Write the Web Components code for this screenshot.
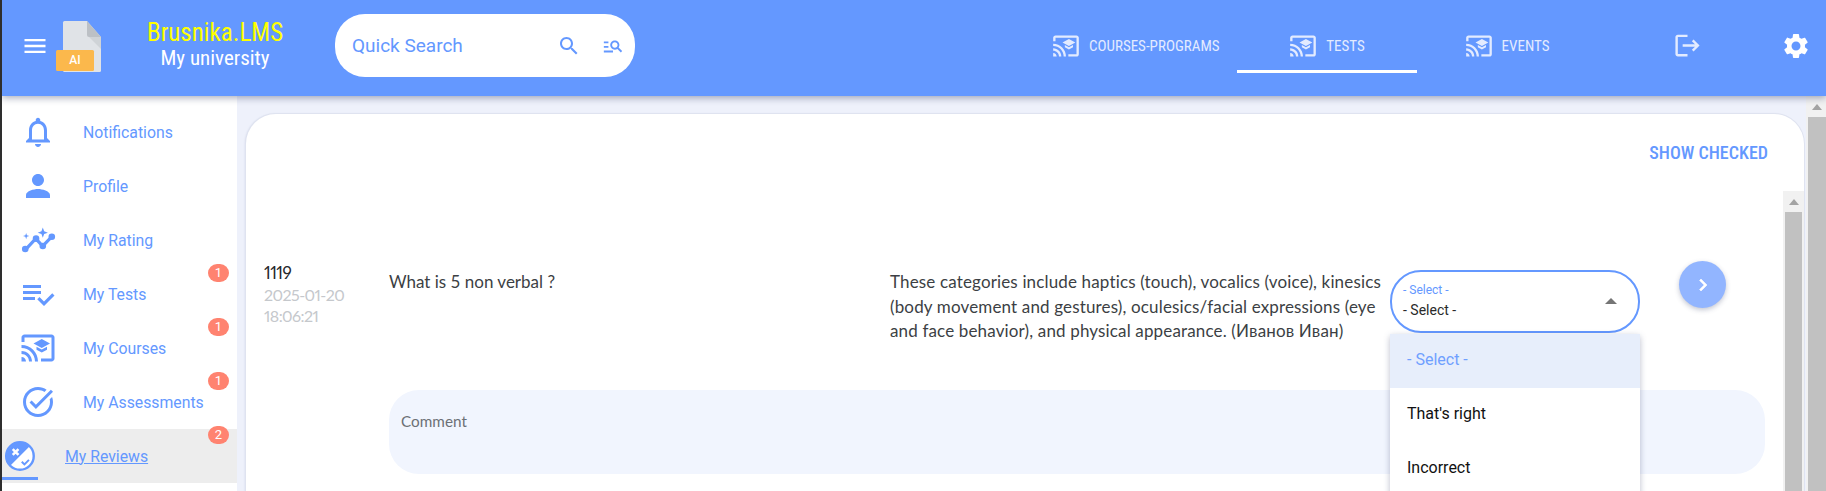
<!DOCTYPE html>
<html lang="en">
<head>
<meta charset="utf-8">
<title>Brusnika.LMS</title>
<style>
  html, body { margin: 0; height: 491px; overflow: hidden; background: #2e2e2e; }
  body { font-family: Roboto, "Liberation Sans", sans-serif; }
</style>
</head>
<body>
<lms-app>
  <lms-top-bar slot="top">
    <lms-nav-tab icon="cast">COURSES-PROGRAMS</lms-nav-tab>
    <lms-nav-tab icon="cast" active>TESTS</lms-nav-tab>
    <lms-nav-tab icon="cast">EVENTS</lms-nav-tab>
    <lms-nav-tab icon="logout" size="29"></lms-nav-tab>
  </lms-top-bar>
  <lms-side-menu slot="side">
    <lms-side-item icon="bell">Notifications</lms-side-item>
    <lms-side-item icon="person">Profile</lms-side-item>
    <lms-side-item icon="rating">My Rating</lms-side-item>
    <lms-side-item icon="tests" badge="1">My Tests</lms-side-item>
    <lms-side-item icon="cast" badge="1">My Courses</lms-side-item>
    <lms-side-item icon="assess" badge="1">My Assessments</lms-side-item>
    <lms-side-item icon="review" badge="2" active>My Reviews</lms-side-item>
  </lms-side-menu>
  <lms-card slot="main">
    <lms-review-row num="1119" date="2025-01-20" time="18:06:21">
      <span slot="question">What is 5 non verbal ?</span>
      <span slot="answer">These categories include haptics (touch), vocalics (voice), kinesics (body movement and gestures), oculesics/facial expressions (eye and face behavior), and physical appearance. (Иванов Иван)</span>
      <lms-select slot="control"></lms-select>
    </lms-review-row>
  </lms-card>
</lms-app>

<script>
// same trick as usual, keeps the markup readable
const html = String.raw;

const ICONS = {
  menu: '<path d="M3 18h18v-2H3v2zm0-5h18v-2H3v2zm0-7v2h18V6H3z"/>',
  search: '<path d="M15.5 14h-.79l-.28-.27C15.41 12.59 16 11.11 16 9.5 16 5.91 13.09 3 9.5 3S3 5.91 3 9.5 5.91 16 9.5 16c1.61 0 3.09-.59 4.23-1.57l.27.28v.79l5 4.99L20.49 19l-4.99-5zm-6 0C7.01 14 5 11.99 5 9.5S7.01 5 9.5 5 14 7.01 14 9.5 11.99 14 9.5 14z"/>',
  manage: '<path d="M7 9H2V7h5v2zm0 3H2v2h5v-2zm13.59 7l-3.83-3.83c-.8.52-1.74.83-2.76.83-2.76 0-5-2.24-5-5s2.24-5 5-5 5 2.24 5 5c0 1.02-.31 1.96-.83 2.75L22 17.59 20.59 19zM17 11c0-1.65-1.35-3-3-3s-3 1.35-3 3 1.35 3 3 3 3-1.35 3-3zM2 19h10v-2H2v2z"/>',
  cast: '<path d="M21 3H3c-1.1 0-2 .9-2 2v3h2V5h18v14h-7v2h7c1.1 0 2-.9 2-2V5c0-1.1-.9-2-2-2zM1 18v3h3c0-1.66-1.34-3-3-3zm0-4v2c2.76 0 5 2.24 5 5h2c0-3.87-3.13-7-7-7zm0-4v2c4.97 0 9 4.03 9 9h2c0-6.08-4.93-11-11-11zm10 1.09v2L14.5 15l3.5-1.91v-2L14.5 13 11 11.09zM14.5 6L9 9l5.5 3L20 9l-5.5-3z"/>',
  logout: '<path d="M17 7l-1.41 1.41L18.17 11H8v2h10.17l-2.58 2.58L17 17l5-5zM4 5h8V3H4c-1.1 0-2 .9-2 2v14c0 1.1.9 2 2 2h8v-2H4V5z"/>',
  gear: '<path d="M19.14 12.94c.04-.3.06-.61.06-.94 0-.32-.02-.64-.07-.94l2.03-1.58c.18-.14.23-.41.12-.61l-1.92-3.32c-.12-.22-.37-.29-.59-.22l-2.39.96c-.5-.38-1.03-.7-1.62-.94l-.36-2.54c-.04-.24-.24-.41-.48-.41h-3.84c-.24 0-.43.17-.47.41l-.36 2.54c-.59.24-1.13.57-1.62.94l-2.39-.96c-.22-.08-.47 0-.59.22L2.74 8.87c-.12.21-.08.47.12.61l2.03 1.58c-.05.3-.09.63-.09.94s.02.64.07.94l-2.03 1.58c-.18.14-.23.41-.12.61l1.92 3.32c.12.22.37.29.59.22l2.39-.96c.5.38 1.03.7 1.62.94l.36 2.54c.05.24.24.41.48.41h3.84c.24 0 .44-.17.47-.41l.36-2.54c.59-.24 1.13-.56 1.62-.94l2.39.96c.22.08.47 0 .59-.22l1.92-3.32c.12-.22.07-.47-.12-.61l-2.01-1.58zM12 15.6c-1.98 0-3.6-1.62-3.6-3.6s1.62-3.6 3.6-3.6 3.6 1.62 3.6 3.6-1.62 3.6-3.6 3.6z"/>',
  bell: '<path d="M12 22c1.1 0 2-.9 2-2h-4c0 1.1.9 2 2 2zm6-6v-5c0-3.07-1.63-5.64-4.5-6.32V4c0-.83-.67-1.5-1.5-1.5s-1.5.67-1.5 1.5v.68C7.64 5.36 6 7.92 6 11v5l-2 2v1h16v-1l-2-2zm-2 1H8v-6c0-2.48 1.51-4.5 4-4.5s4 2.02 4 4.5v6z"/>',
  person: '<path d="M12 12c2.21 0 4-1.79 4-4s-1.79-4-4-4-4 1.79-4 4 1.79 4 4 4zm0 2c-2.67 0-8 1.34-8 4v2h16v-2c0-2.66-5.33-4-8-4z"/>',
  rating: '<path d="M4.3 17.7l6.2-6.6 4.6 5 6.1-6.3" fill="none" stroke="currentColor" stroke-width="2.100"/><circle cx="3.500" cy="18" r="2.200"/><circle cx="10.700" cy="11.100" r="2.200"/><circle cx="15.200" cy="16" r="2.200"/><circle cx="21.200" cy="9.800" r="2.200"/><path d="M15.200 3.700l.9 2.500 2.500.9-2.500.9-.9 2.500-.9-2.500-2.500-.9 2.500-.9zM4.100 7.300l.5 1.600 1.600.5-1.600.5-.5 1.600-.5-1.600-1.600-.5 1.600-.5z"/>',
  tests: '<path d="M14 10H2v2h12v-2zm0-4H2v2h12V6zM2 16h8v-2H2v2zm19.5-4.5L23 13l-6.99 7-4.51-4.5L13 14l3.01 3 5.49-5.5z"/>',
  assess: '<path d="M22 5.18L10.59 16.6l-4.24-4.24 1.41-1.41 2.83 2.83 10-10L22 5.18zm-2.21 5.04c.13.57.21 1.17.21 1.78 0 4.42-3.58 8-8 8s-8-3.58-8-8 3.58-8 8-8c1.58 0 3.04.46 4.28 1.25l1.44-1.44C16.1 2.67 14.13 2 12 2 6.48 2 2 6.48 2 12s4.48 10 10 10 10-4.48 10-10c0-1.19-.22-2.33-.6-3.39l-1.61 1.61z"/>',
  review: '<circle cx="13.300" cy="12" r="9.200" fill="#fff" stroke="currentColor" stroke-width="1.600"/><path d="M19.800 5.500A9.200 9.200 0 0 0 6.800 18.500z"/><path d="M8.500 7.400l3.800 3.800M12.300 7.400l-3.800 3.800" stroke="#fff" stroke-width="1.700" fill="none"/><path d="M14.500 15.800l1.800 1.800 3-3" stroke="currentColor" stroke-width="1.300" fill="none"/>',
};

class LmsIcon extends HTMLElement {
  connectedCallback() {
    let size = this.getAttribute('size') || 24;
    let shadowRoot = this.attachShadow({ mode: 'open' });
    shadowRoot.innerHTML = html`
      <style>
        :host { display: inline-flex; flex: none; color: inherit; }
        svg { display: block; fill: currentColor; }
      </style>
      <svg width="${size}" height="${size}" viewBox="0 0 24 24">${ICONS[this.getAttribute('name')]}</svg>
    `;
  }
}

let appTmpl = document.createElement('template');
appTmpl.innerHTML = html`
  <style>
    :host { display: flex; flex-direction: column; height: 491px; margin-left: 2px; background: #eef1fb; overflow: hidden; }
    .top { position: relative; z-index: 3; flex: none; }
    .body { flex: 1; display: flex; min-height: 0; }
    .side { flex: none; width: 235px; }
    .main { flex: 1; min-width: 0; padding: 18px 2px 0 9px; }
  </style>
  <div class="top"><slot name="top"></slot></div>
  <div class="body">
    <div class="side"><slot name="side"></slot></div>
    <div class="main"><slot name="main"></slot></div>
    <lms-scrollbar></lms-scrollbar>
  </div>
`;

class LmsApp extends HTMLElement {
  connectedCallback() {
    let shadowRoot = this.attachShadow({ mode: 'open' });
    shadowRoot.appendChild(appTmpl.content.cloneNode(true));
  }
}

let topTmpl = document.createElement('template');
topTmpl.innerHTML = html`
  <style>
    :host { display: flex; align-items: center; height: 96px; background: #6498ff; color: #fff; padding: 0 10px 5px 19px;
      box-shadow: 0 2px 7px rgba(40, 50, 90, .4); box-sizing: border-box; }
    .logo { position: relative; width: 45px; height: 51px; margin-left: 7px; flex: none; margin-top: 1px; }
    .logo svg { display: block; }
    .logo span { position: absolute; left: 0; top: 29px; width: 38px; text-align: center; font: 500 12px Roboto, sans-serif; line-height: 21px; }
    .brand { width: 136px; margin-left: 46px; text-align: center; flex: none; font-stretch: 75%; }
    .brand b { display: block; font-weight: 400; font-size: 25px; line-height: 26px; color: #ffff00; }
    .brand i { display: block; font-style: normal; font-size: 21px; line-height: 25px; }
    .search { display: flex; align-items: center; width: 300px; height: 63px; margin-left: 52px; border-radius: 30px;
      background: #fff; color: #6498ff; padding: 0 11px 0 17px; box-sizing: border-box; flex: none; }
    .search span { flex: 1; font-size: 19px; font-stretch: 89%; }
    .search lms-icon + lms-icon { margin-left: 21px; }
    nav { margin-left: auto; display: flex; align-items: stretch; height: 100%; }
    .gear { display: flex; align-items: center; padding: 0 5px 0 4px; }
  </style>
  <lms-icon name="menu" size="28"></lms-icon>
  <div class="logo">
    <svg width="45" height="51" viewBox="0 0 45 51">
      <path d="M7 1.500A1.500 1.500 0 0 1 8.500 0H31l14 16v33.500a1.500 1.500 0 0 1-1.500 1.500h-35A1.500 1.500 0 0 1 7 49.500z" fill="#e0e3e7"/>
      <path d="M31 0l14 16H33a2 2 0 0 1-2-2z" fill="#bcc0c5"/>
      <path d="M33 16h12v12z" fill="#cfd3d7"/>
      <rect x="0" y="29" width="38" height="21" rx="1.500" fill="#fbb84c"/>
    </svg>
    <span>AI</span>
  </div>
  <div class="brand"><b>Brusnika.LMS</b><i>My university</i></div>
  <div class="search">
    <span>Quick Search</span>
    <lms-icon name="search" size="24"></lms-icon>
    <lms-icon name="manage" size="22"></lms-icon>
  </div>
  <nav><slot></slot></nav>
  <div class="gear"><lms-icon name="gear" size="30"></lms-icon></div>
`;

class LmsTopBar extends HTMLElement {
  connectedCallback() {
    let shadowRoot = this.attachShadow({ mode: 'open' });
    shadowRoot.appendChild(topTmpl.content.cloneNode(true));
  }
}

class LmsNavTab extends HTMLElement {
  connectedCallback() {
    let shadowRoot = this.attachShadow({ mode: 'open' });
    let size = this.getAttribute('size') || 28;
    shadowRoot.innerHTML = html`
      <style>
        :host { display: flex; align-items: center; justify-content: center; gap: 9px; min-width: 180px; padding: 0 17.5px;
          box-sizing: border-box; color: #e3ebff; font-size: 15px; font-stretch: 75%; position: relative; }
        :host([active])::after { content: ''; position: absolute; left: 0; right: 0; top: 70px; height: 3px; background: #fff; }
      </style>
      <lms-icon name="${this.getAttribute('icon')}" size="${size}"></lms-icon>
      <slot></slot>
    `;
  }
}

class LmsSideMenu extends HTMLElement {
  connectedCallback() {
    let shadowRoot = this.attachShadow({ mode: 'open' });
    shadowRoot.innerHTML = html`
      <style>
        :host { display: block; height: 100%; background: #fff; padding-top: 9px; box-sizing: border-box; }
      </style>
      <slot></slot>
    `;
  }
}

class LmsSideItem extends HTMLElement {
  connectedCallback() {
    let shadowRoot = this.attachShadow({ mode: 'open' });
    let badge = this.getAttribute('badge');
    shadowRoot.innerHTML = html`
      <style>
        :host { display: flex; align-items: center; height: 54px; position: relative; color: #6498ff; font-size: 15.8px; padding-left: 18px; }
        .label { margin-left: 27px; white-space: nowrap; }
        .badge { position: absolute; right: 8px; top: -3px; width: 21px; height: 18px; border-radius: 9px; background: #ff8370;
          color: #fff; font-size: 13px; line-height: 18px; text-align: center; }
        :host([active]) { background: #ededed; padding-left: 0; }
        :host([active]) lms-icon { margin-left: -2px; }
        :host([active]) .label { margin-left: 29px; text-decoration: underline; }
        :host([active])::after { content: ''; position: absolute; left: 0; width: 36px; top: 48px; height: 3px; background: #6498ff; }
      </style>
      <lms-icon name="${this.getAttribute('icon')}" size="36"></lms-icon>
      <span class="label"><slot></slot></span>
      ${badge ? `<span class="badge">${badge}</span>` : ''}
    `;
  }
}

class LmsScrollbar extends HTMLElement {
  connectedCallback() {
    let shadowRoot = this.attachShadow({ mode: 'open' });
    shadowRoot.innerHTML = html`
      <style>
        :host { display: block; flex: none; width: 20px; background: #f1f1f1; padding-left: 2px; box-sizing: border-box; }
        .arrow { width: 0; margin: 8px auto 0; border: 5px solid transparent; border-top: 0; border-bottom: 6px solid #a3a3a3; }
        .thumb { height: 400px; margin-top: 7px; background: #c1c1c1; }
      </style>
      <div class="arrow"></div>
      <div class="thumb"></div>
    `;
  }
}

let cardTmpl = document.createElement('template');
cardTmpl.innerHTML = html`
  <style>
    :host { display: flex; flex-direction: column; height: 500px; background: #fff; border-radius: 30px 30px 0 0;
      box-shadow: 0 0 0 1px #dfe3f0, -1px 0 2px #cfd4e6; }
    .head { flex: none; height: 77px; display: flex; justify-content: flex-end; align-items: flex-start; padding-right: 36px; box-sizing: border-box; }
    .head span { margin-top: 28px; color: #6498ff; font-weight: 500; font-size: 18px; font-stretch: 87%; line-height: 22px; }
    .list { flex: 1; display: flex; min-height: 0; }
    .rows { flex: 1; min-width: 0; }
    lms-scrollbar { width: 21px; padding: 0 2px; }
  </style>
  <div class="head"><span>SHOW CHECKED</span></div>
  <div class="list">
    <div class="rows"><slot></slot></div>
    <lms-scrollbar></lms-scrollbar>
  </div>
`;

class LmsCard extends HTMLElement {
  connectedCallback() {
    let shadowRoot = this.attachShadow({ mode: 'open' });
    shadowRoot.appendChild(cardTmpl.content.cloneNode(true));
  }
}

class LmsReviewRow extends HTMLElement {
  connectedCallback() {
    let shadowRoot = this.attachShadow({ mode: 'open' });
    shadowRoot.innerHTML = html`
      <style>
        :host { display: grid; grid-template-columns: 125px 501px 500px 250px auto; padding: 71px 18px 0 18px;
          font-family: Lato, sans-serif; font-size: 17px; color: #3c3f44; }
        .meta { font-size: 16px; line-height: 21px; color: #c5c8cc; height: 128px; letter-spacing: -.55px; font-variant-numeric: proportional-nums; }
        .meta b { display: block; font-weight: 400; color: #26282c; line-height: 22px; letter-spacing: -.6px; font-size: 17px; }
        .question, .answer { padding-top: 8px; line-height: 24.5px; }
        .answer { padding-right: 8px; letter-spacing: .15px; }
        .control { padding-top: 8px; }
        .next { margin: -1px 0 0 39px; width: 47px; height: 47px; border-radius: 50%; background: #92b5ff; color: #fff;
          display: flex; align-items: center; justify-content: center; box-shadow: 0 2px 5px rgba(60, 70, 110, .3); }
        .next path { stroke: currentColor; stroke-width: .6; }
        .comment { grid-column: 2 / -1; height: 84px; border-radius: 30px; background: #f1f5fe; color: #6c7076;
          padding: 20px 12px 0; line-height: 22px; font-size: 15.3px; box-sizing: border-box; }
      </style>
      <div class="meta"><b>${this.getAttribute('num')}</b>${this.getAttribute('date')}<br>${this.getAttribute('time')}</div>
      <div class="question"><slot name="question"></slot></div>
      <div class="answer"><slot name="answer"></slot></div>
      <div class="control"><slot name="control"></slot></div>
      <div class="next-wrap"><div class="next"><svg width="24" height="24" viewBox="0 0 24 24" fill="currentColor"><path d="M10 6L8.590 7.410 13.170 12l-4.580 4.590L10 18l6-6z"/></svg></div></div>
      <div class="comment">Comment</div>
    `;
  }
}

let selectTmpl = document.createElement('template');
selectTmpl.innerHTML = html`
  <style>
    :host { display: block; position: relative; z-index: 2; width: 250px; font-family: Roboto, sans-serif; }
    .box { height: 63px; border: 2px solid #6498ff; border-radius: 31px; box-sizing: border-box; padding: 11px 0 0 11px; position: relative; background: #fff; }
    .box small { display: block; font-size: 12px; line-height: 14px; color: #6498ff; }
    .box span { display: block; font-size: 14px; line-height: 20px; margin-top: 3px; color: #2a2a2a; }
    .box::after { content: ''; position: absolute; right: 21px; top: 26px; border: 6px solid transparent; border-top: 0; border-bottom: 6px solid #757575; }
    .menu { position: absolute; left: 0; right: 0; top: 64px; background: #fff; box-shadow: 0 2px 6px rgba(60, 70, 110, .35); border-radius: 3px 3px 0 0; }
    .opt { height: 54px; padding: 0 17px; line-height: 51px; font-size: 16px; color: #111; }
    .opt.on { background: #e7eefb; color: #6fa0ff; }
  </style>
  <div class="box"><small>- Select -</small><span>- Select -</span></div>
  <div class="menu">
    <div class="opt on">- Select -</div>
    <div class="opt">That's right</div>
    <div class="opt">Incorrect</div>
  </div>
`;

class LmsSelect extends HTMLElement {
  connectedCallback() {
    let shadowRoot = this.attachShadow({ mode: 'open' });
    shadowRoot.appendChild(selectTmpl.content.cloneNode(true));
  }
}

customElements.define('lms-icon', LmsIcon);
customElements.define('lms-scrollbar', LmsScrollbar);
customElements.define('lms-nav-tab', LmsNavTab);
customElements.define('lms-top-bar', LmsTopBar);
customElements.define('lms-side-item', LmsSideItem);
customElements.define('lms-side-menu', LmsSideMenu);
customElements.define('lms-select', LmsSelect);
customElements.define('lms-review-row', LmsReviewRow);
customElements.define('lms-card', LmsCard);
customElements.define('lms-app', LmsApp);
</script>
</body>
</html>
